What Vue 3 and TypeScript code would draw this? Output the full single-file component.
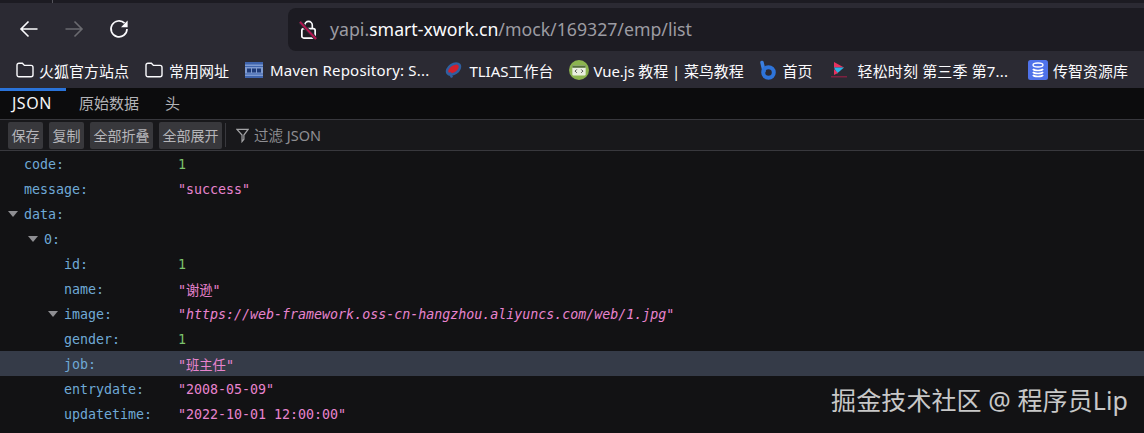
<script setup lang="ts">
interface Row { key: string; val?: string; kind?: 'num' | 'str' | 'link'; level: number; arrow?: boolean; hl?: boolean }
const rows: Row[] = [
  { key: 'code:', val: '1', kind: 'num', level: 0 },
  { key: 'message:', val: '"success"', kind: 'str', level: 0 },
  { key: 'data:', level: 0, arrow: true },
  { key: '0:', level: 1, arrow: true },
  { key: 'id:', val: '1', kind: 'num', level: 2 },
  { key: 'name:', val: '"谢逊"', kind: 'str', level: 2 },
  { key: 'image:', val: 'https://web-framework.oss-cn-hangzhou.aliyuncs.com/web/1.jpg', kind: 'link', level: 2, arrow: true },
  { key: 'gender:', val: '1', kind: 'num', level: 2 },
  { key: 'job:', val: '"班主任"', kind: 'str', level: 2, hl: true },
  { key: 'entrydate:', val: '"2008-05-09"', kind: 'str', level: 2 },
  { key: 'updatetime:', val: '"2022-10-01 12:00:00"', kind: 'str', level: 2 },
]
const buttons = ['保存', '复制', '全部折叠', '全部展开']
const indentClass = (r: Row) => `lvl${r.level}`
</script>

<template>
  <div class="page">
    <div class="tabstrip"><span class="tabsep"></span></div>
    <div class="nav">
      <svg class="navicon back" viewBox="0 0 20 20" fill="none" stroke="#fbfbfe" stroke-width="1.6"><path d="M18.5 10H2M9.5 2.5 2 10l7.5 7.5"/></svg>
      <svg class="navicon fwd" viewBox="0 0 20 20" fill="none" stroke="#6a6a70" stroke-width="1.6"><path d="M1.5 10H18M10.5 2.5 18 10l-7.5 7.5"/></svg>
      <svg class="navicon reload" viewBox="0 0 20 20" fill="none"><path d="M15.6 4.2A8 8 0 1 0 18 10" stroke="#fbfbfe" stroke-width="1.7"/><path d="M18.6 1.6v6.6H12z" fill="#fbfbfe"/></svg>
      <div class="urlbar">
        <svg class="lock" viewBox="0 0 20 22" fill="none"><path d="M6 10V6.5a4 4 0 0 1 8 0V10" stroke="#fbfbfe" stroke-width="1.7"/><rect x="3" y="10" width="14" height="10" rx="2" stroke="#fbfbfe" stroke-width="1.8"/><path d="M1 3 18 21" stroke="#2b2a33" stroke-width="4"/><path d="M1 3 18 21" stroke="#b3134f" stroke-width="2"/></svg>
        <span class="address"><span class="dim">yapi.</span><span class="host">smart-xwork.cn</span><span class="dim">/mock/169327/emp/list</span></span>
      </div>
    </div>
    <div class="bookmarks">
      <span class="bm b1">
        <svg class="fav" viewBox="0 0 18 16" fill="none" stroke="#fbfbfe" stroke-width="1.4"><path d="M1 3.2C1 2 1.8 1.2 3 1.2h3.4l2 2.2H15c1.200 0 2 .8 2 2v7.400c0 1.200-.8 2-2 2H3c-1.200 0-2-.8-2-2z"/></svg>
        火狐官方站点
      </span>
      <span class="bm b2">
        <svg class="fav" viewBox="0 0 18 16" fill="none" stroke="#fbfbfe" stroke-width="1.4"><path d="M1 3.2C1 2 1.8 1.2 3 1.2h3.4l2 2.2H15c1.200 0 2 .8 2 2v7.400c0 1.200-.8 2-2 2H3c-1.200 0-2-.8-2-2z"/></svg>
        常用网址
      </span>
      <span class="bm b3">
        <svg class="fav" viewBox="0 0 18 18"><rect y="1" width="18" height="16" fill="#7f9bd0"/><rect y="1" width="18" height="2.500" fill="#3f64ad"/><rect y="5" width="18" height="1" fill="#3f64ad"/><rect y="12.500" width="18" height="1" fill="#3f64ad"/><rect y="15" width="18" height="2" fill="#3f64ad"/><rect x="2" y="7.500" width="4" height="4" fill="#1f3b78"/><rect x="7" y="7.500" width="4" height="4" fill="#1f3b78"/><rect x="12" y="7.500" width="4" height="4" fill="#1f3b78"/></svg>
        Maven Repository: S...
      </span>
      <span class="bm b4">
        <svg class="fav" viewBox="0 0 18 18"><ellipse cx="9.500" cy="8" rx="8.500" ry="5.800" transform="rotate(-35 9.500 8)" fill="#2f5f9f"/><ellipse cx="9.500" cy="8" rx="6" ry="3.300" transform="rotate(-35 9.500 8)" fill="#d3202c"/><path d="M4 12l3 5 2-1-2-5z" fill="#2f5f9f"/></svg>
        TLIAS工作台
      </span>
      <span class="bm b5">
        <svg class="fav wide" viewBox="0 0 18 18"><circle cx="9" cy="9" r="9" fill="#8cb44f"/><rect x="3" y="5" width="12" height="9" rx="1" fill="#e9eee0"/><rect x="3" y="5" width="12" height="2" fill="#55703a"/><path d="M7 8.500 5.500 10 7 11.500M11 8.500l1.500 1.500-1.500 1.500" stroke="#4a4a4a" fill="none" stroke-width=".9"/></svg>
        Vue.js 教程 | 菜鸟教程
      </span>
      <span class="bm b6">
        <svg class="fav tall" viewBox="0 0 18 20"><path d="M3 2.500 5 11" stroke="#3b7fe0" stroke-width="3.500" fill="none" stroke-linecap="round"/><circle cx="9.500" cy="12.500" r="5.300" fill="none" stroke="#2e74da" stroke-width="4"/></svg>
        首页
      </span>
      <span class="bm b7">
        <svg class="fav" viewBox="0 0 18 18"><path d="M4 1l10 5.500H4z" fill="#e8325f"/><path d="M14 6.500 7 12.500 4 6.500z" fill="#27b4e8"/><path d="M4 8l4 4-4 2z" fill="#e8325f"/><rect x="1" y="15" width="16" height="1.500" fill="#7d2140"/></svg>
        轻松时刻 第三季 第7...
      </span>
      <span class="bm b8">
        <svg class="fav wide" viewBox="0 0 20 20"><rect width="20" height="20" rx="2.500" fill="#4f72ea"/><ellipse cx="10" cy="5" rx="5" ry="2" fill="none" stroke="#fff" stroke-width="1.300"/><path d="M5 9c1 2 9 2 10 0M5 12c1 2 9 2 10 0M5 15c1 2 9 2 10 0" stroke="#fff" stroke-width="1.700" fill="none"/></svg>
        传智资源库
      </span>
    </div>
    <div class="tabs">
      <span class="tab active">JSON</span>
      <span class="tab">原始数据</span>
      <span class="tab">头</span>
    </div>
    <div class="tools">
      <button v-for="b in buttons" :key="b" class="btn">{{ b }}</button>
      <span class="toolsep"></span>
      <svg class="filter" viewBox="0 0 14 16" fill="none" stroke="#a3a3a6" stroke-width="1.300"><path d="M1 1.500h12L8.500 7.500V12L6.500 14.500V7.500z"/></svg>
      <span class="filtertext">过滤 JSON</span>
    </div>
    <div class="tree">
      <div v-for="r in rows" :key="r.key" class="row" :class="{ hl: r.hl }">
        <div class="keycell" :class="indentClass(r)">
          <span v-if="r.arrow" class="arrow"></span>
          <span class="key">{{ r.key }}</span>
        </div>
        <div class="val" :class="r.kind">
          <template v-if="r.kind === 'link'">"<em>{{ r.val }}</em>"</template>
          <template v-else>{{ r.val }}</template>
        </div>
      </div>
    </div>
    <div class="mark">掘金技术社区 @ 程序员Lip</div>
  </div>
</template>

<style scoped>
.page {
  position: relative;
  width: 1144px;
  height: 433px;
  overflow: hidden;
  background: #121214;
  font-family: "Noto Sans", "Noto Sans CJK SC", sans-serif;
}
.tabstrip { height: 3px; background: #1c1b22; position: relative; }
.tabsep { position: absolute; left: 52px; top: 0; width: 1px; height: 3px; background: #55555c; }
.nav {
  height: 52px;
  background: #2b2a33;
  display: flex;
  align-items: center;
  padding: 0 0 0 19px;
  box-sizing: border-box;
}
.navicon { width: 20px; height: 20px; flex: none; }
.fwd { margin-left: 25px; }
.reload { margin-left: 25px; }
.urlbar {
  margin-left: 159px;
  flex: 1;
  height: 43px;
  margin-top: 1px;
  background: #1c1b22;
  border-radius: 8px 0 0 8px;
  display: flex;
  align-items: center;
  padding-left: 11px;
}
.lock { width: 19px; height: 21px; flex: none; }
.address { margin: 0 0 2px 12px; font-size: 17.7px; white-space: nowrap; }
.dim { color: #9c9ca2; }
.host { color: #fbfbfe; }
.bookmarks {
  height: 33px;
  box-sizing: border-box;
  padding: 0 0 3px 16px;
  background: #2b2a33;
  display: flex;
  align-items: center;
  color: #fbfbfe;
  font-size: 15px;
  white-space: nowrap;
}
.bm { display: inline-flex; align-items: center; flex: none; }
.fav { width: 18px; height: 18px; flex: none; }
.fav.wide { width: 20px; height: 20px; }
.fav.tall { height: 20px; }
.b1 { gap: 5px; }
.b2 { margin-left: 16px; gap: 6px; }
.b3 { margin-left: 16px; gap: 7px; letter-spacing: .2px; }
.b4 { margin-left: 15px; gap: 7px; }
.b5 { margin-left: 15px; gap: 5px; letter-spacing: -.1px; }
.b6 { margin-left: 15px; gap: 6px; }
.b7 { margin-left: 17px; gap: 10px; letter-spacing: .15px; }
.b8 { margin-left: 20px; gap: 5px; }
.tabs {
  height: 32px;
  box-sizing: border-box;
  background: #0c0c0d;
  border-bottom: 1px solid #38383d;
  display: flex;
  align-items: center;
  font-size: 15px;
  color: #b4b4b8;
}
.tab { padding: 0 13px 2px; height: 100%; display: flex; align-items: center; box-sizing: border-box; }
.tab.active {
  color: #f5f5f7;
  width: 66px;
  box-shadow: inset 0 3px 0 #2a73d9;
  padding: 0 0 2px 12px;
  font-size: 16px;
  letter-spacing: .5px;
}
.tools {
  height: 31px;
  box-sizing: border-box;
  background: #18181b;
  border-bottom: 1px solid #38383d;
  display: flex;
  align-items: center;
  padding: 0 0 0 8px;
  gap: 6px;
}
.btn {
  height: 27px;
  border: 0;
  border-radius: 2px;
  background: #38383c;
  color: #b5b5b9;
  font: 14px "Noto Sans CJK SC", sans-serif;
  padding: 0 3.5px;
  margin: 0;
}
.toolsep { width: 1px; height: 24px; background: #38383d; margin-left: -3px; }
.filter { width: 13px; height: 15px; margin-left: 4px; flex: none; }
.filtertext { color: #8e8e92; font-size: 14.5px; margin: 0 0 1px -1px; }
.tree { font-family: "DejaVu Sans Mono", "Noto Sans CJK SC", monospace; font-size: 13.3px; }
.row { height: 25px; box-sizing: border-box; padding-top: 2px; display: flex; align-items: center; }
.row.hl { background: #353b48; }
.keycell { width: 178px; box-sizing: border-box; position: relative; flex: none; }
.lvl0 { padding-left: 24px; }
.lvl1 { padding-left: 44px; }
.lvl2 { padding-left: 64px; }
.arrow {
  position: absolute;
  top: 4px;
  margin-left: -16px;
  width: 0;
  height: 0;
  border-left: 5px solid transparent;
  border-right: 5px solid transparent;
  border-top: 6px solid #8e8e92;
}
.key { color: #6fa9d6; }
.val.num { color: #7cc26c; }
.val.str, .val.link { color: #e884cf; }
.val em { font-style: italic; }
.mark {
  position: absolute;
  right: 16px;
  top: 381px;
  font-size: 25px;
  letter-spacing: .1px;
  color: #c8c8c8;
  white-space: nowrap;
}
</style>
